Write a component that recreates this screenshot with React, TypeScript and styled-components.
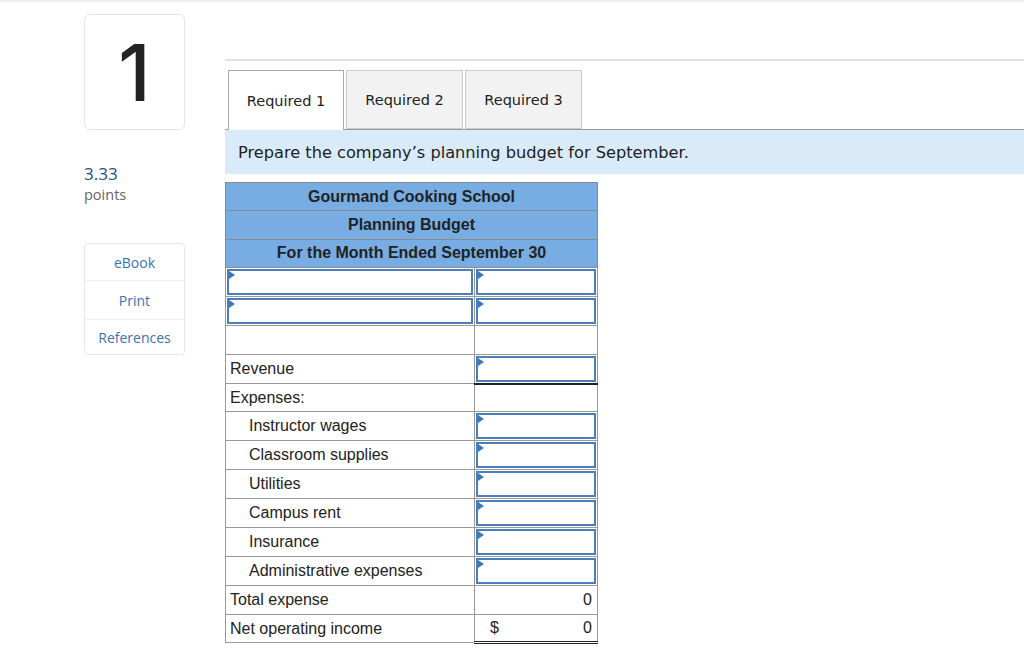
import React from 'react';
import styled, { createGlobalStyle } from 'styled-components';

const GlobalStyle = createGlobalStyle`
    html, body {
        margin: 0;
        padding: 0;
        background: #ffffff;
    }
    body {
        font-family: 'Liberation Sans', Arial, sans-serif;
        color: #222222;
    }
`;

const Page = styled.div`
    display: flex;
    gap: 40px;
    padding-left: 84px;
    border-top: 2px solid #eeeeee;
    min-height: 651px;
`;

const Sidebar = styled.aside`
    width: 101px;
    flex: none;
    padding-top: 12px;
    font-family: 'Open Sans', sans-serif;
`;

const NumberBox = styled.div`
    box-sizing: border-box;
    height: 116px;
    border: 1px solid #e6e6e6;
    border-radius: 6px;
    display: flex;
    align-items: center;
    justify-content: center;
    font-family: 'Inter', sans-serif;
    font-weight: 500;
    font-size: 78px;
    line-height: 1;
    color: #222222;
    padding-top: 2px;
`;

const Points = styled.div`
    margin-top: 33px;
    line-height: 21px;
`;

const PointValue = styled.div`
    font-size: 17px;
    color: #1d4f8b;
`;

const PointLabel = styled.div`
    font-size: 14.5px;
    color: #666666;
`;

const LinkList = styled.div`
    margin-top: 38px;
    border: 1px solid #e6e6e6;
    border-radius: 4px;
    display: flex;
    flex-direction: column;
`;

const LinkItem = styled.a<{ $height: number }>`
    height: ${(p) => p.$height}px;
    display: flex;
    align-items: center;
    justify-content: center;
    font-size: 14px;
    color: #3a72b5;
    text-decoration: none;
    border-top: 1px solid #eeeeee;
    &:first-child {
        border-top: none;
    }
`;

const Main = styled.main`
    flex: 1;
    padding-top: 57px;
`;

const Rule = styled.div`
    height: 2px;
    background: #e2e2e2;
`;

const TabList = styled.div`
    margin-top: 9px;
    display: flex;
    gap: 2px;
    padding-left: 3px;
    border-bottom: 1px solid #999999;
    height: 59px;
    font-family: 'DejaVu Sans', Verdana, sans-serif;
`;

const Tab = styled.div<{ $active?: boolean; $width: number }>`
    box-sizing: border-box;
    width: ${(p) => p.$width}px;
    height: ${(p) => (p.$active ? 60 : 59)}px;
    border: 1px solid ${(p) => (p.$active ? '#a8a8a8' : '#cccccc')};
    border-bottom: ${(p) => (p.$active ? 'none' : '1px solid #cccccc')};
    background: ${(p) => (p.$active ? '#ffffff' : '#f2f2f2')};
    display: flex;
    align-items: center;
    justify-content: center;
    font-size: 14.5px;
    color: #222222;
    position: relative;
    z-index: 1;
`;

const Instruction = styled.div`
    height: 44px;
    background: #d9ebf9;
    display: flex;
    align-items: center;
    padding-left: 13px;
    font-family: 'DejaVu Sans', Verdana, sans-serif;
    font-size: 16.2px;
    color: #222222;
`;

const Budget = styled.table`
    margin-top: 8px;
    border-collapse: collapse;
    width: 372px;
    table-layout: fixed;
    font-size: 16px;
    border: 1px solid #888888;
`;

const Row = styled.tr`
    height: 28.4px;
`;

const HeadCell = styled.th`
    background: #78ade3;
    border: 1px solid #8a8a8a;
    font-weight: bold;
    font-size: 16px;
    color: #222222;
    text-align: center;
    padding: 0;
`;

const LabelCell = styled.td<{ $indent?: boolean }>`
    border: 1px solid #999999;
    padding: 0 0 0 ${(p) => (p.$indent ? 23 : 4)}px;
    color: #222222;
    white-space: nowrap;
`;

const ValueCell = styled.td<{ $underline?: 'single' | 'top-double' }>`
    border: 1px solid #999999;
    padding: 1px;
    ${(p) => (p.$underline === 'single' ? 'border-bottom: 2px solid #222222;' : '')}
    ${(p) => (p.$underline === 'top-double' ? 'border-top: 1px solid #222222; border-bottom: 3px double #222222;' : '')}
`;

const InputBox = styled.div`
    position: relative;
    box-sizing: border-box;
    height: 26px;
    border: 2px solid #4a7ebd;
    background: #ffffff;

    &::before {
        content: '';
        position: absolute;
        top: 0;
        left: 0;
        border-left: 6px solid #3a78c2;
        border-top: 4px solid transparent;
        border-bottom: 4px solid transparent;
    }
`;

const Amount = styled.div`
    display: flex;
    justify-content: space-between;
    padding: 0 4px 0 14px;
`;

const expenses = [
    'Instructor wages',
    'Classroom supplies',
    'Utilities',
    'Campus rent',
    'Insurance',
    'Administrative expenses',
];

export default function App() {
    return (
        <>
            <GlobalStyle />
            <Page>
                <Sidebar>
                    <NumberBox>1</NumberBox>
                    <Points>
                        <PointValue>3.33</PointValue>
                        <PointLabel>points</PointLabel>
                    </Points>
                    <LinkList>
                        <LinkItem $height={36}>eBook</LinkItem>
                        <LinkItem $height={38}>Print</LinkItem>
                        <LinkItem $height={34}>References</LinkItem>
                    </LinkList>
                </Sidebar>
                <Main>
                    <Rule />
                    <TabList>
                        <Tab $active $width={116}>Required 1</Tab>
                        <Tab $width={117}>Required 2</Tab>
                        <Tab $width={117}>Required 3</Tab>
                    </TabList>
                    <Instruction>Prepare the company’s planning budget for September.</Instruction>
                    <Budget>
                        <colgroup>
                            <col style={{ width: 249 }} />
                            <col style={{ width: 123 }} />
                        </colgroup>
                        <tbody>
                            <Row>
                                <HeadCell colSpan={2}>Gourmand Cooking School</HeadCell>
                            </Row>
                            <Row>
                                <HeadCell colSpan={2}>Planning Budget</HeadCell>
                            </Row>
                            <Row>
                                <HeadCell colSpan={2}>For the Month Ended September 30</HeadCell>
                            </Row>
                            {[0, 1].map((i) => (
                                <Row key={i}>
                                    <ValueCell>
                                        <InputBox />
                                    </ValueCell>
                                    <ValueCell>
                                        <InputBox />
                                    </ValueCell>
                                </Row>
                            ))}
                            <Row>
                                <LabelCell />
                                <ValueCell />
                            </Row>
                            <Row>
                                <LabelCell>Revenue</LabelCell>
                                <ValueCell $underline="single">
                                    <InputBox />
                                </ValueCell>
                            </Row>
                            <Row>
                                <LabelCell>Expenses:</LabelCell>
                                <ValueCell />
                            </Row>
                            {expenses.map((name) => (
                                <Row key={name}>
                                    <LabelCell $indent>{name}</LabelCell>
                                    <ValueCell>
                                        <InputBox />
                                    </ValueCell>
                                </Row>
                            ))}
                            <Row>
                                <LabelCell>Total expense</LabelCell>
                                <ValueCell>
                                    <Amount>
                                        <span />
                                        <span>0</span>
                                    </Amount>
                                </ValueCell>
                            </Row>
                            <Row>
                                <LabelCell>Net operating income</LabelCell>
                                <ValueCell $underline="top-double">
                                    <Amount>
                                        <span>$</span>
                                        <span>0</span>
                                    </Amount>
                                </ValueCell>
                            </Row>
                        </tbody>
                    </Budget>
                </Main>
            </Page>
        </>
    );
}
